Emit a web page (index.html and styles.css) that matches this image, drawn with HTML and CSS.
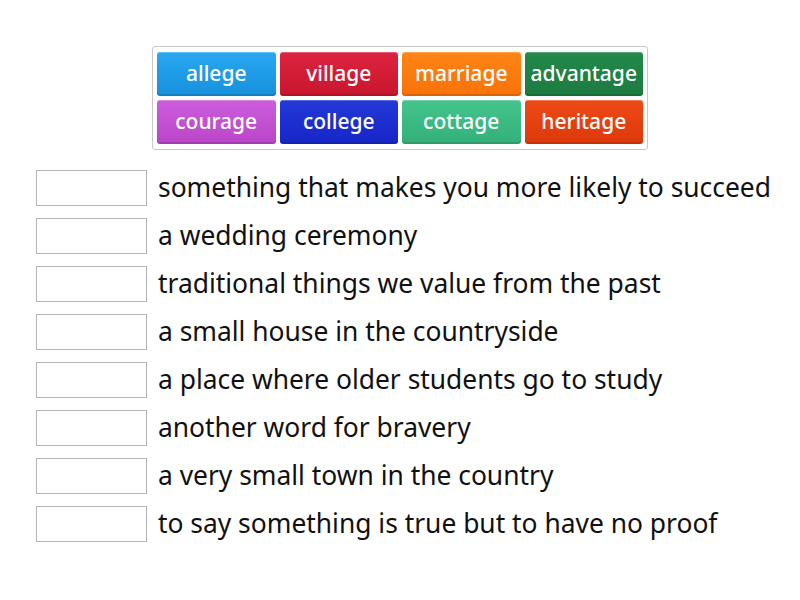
FILE: index.html
```html
<!DOCTYPE html>
<html>
<head>
<meta charset="utf-8">
<link rel="stylesheet" href="styles.css">
</head>
<body>
<div class="page">
  <div class="bank">
    <div class="tile t-blue">allege</div>
    <div class="tile t-red">village</div>
    <div class="tile t-orange">marriage</div>
    <div class="tile t-green">advantage</div>
    <div class="tile t-purple">courage</div>
    <div class="tile t-navy">college</div>
    <div class="tile t-teal">cottage</div>
    <div class="tile t-vermilion">heritage</div>
  </div>
  <div class="list">
    <div class="row"><div class="slot"></div><div class="clue">something that makes you more likely to succeed</div></div>
    <div class="row"><div class="slot"></div><div class="clue">a wedding ceremony</div></div>
    <div class="row"><div class="slot"></div><div class="clue">traditional things we value from the past</div></div>
    <div class="row"><div class="slot"></div><div class="clue">a small house in the countryside</div></div>
    <div class="row"><div class="slot"></div><div class="clue">a place where older students go to study</div></div>
    <div class="row"><div class="slot"></div><div class="clue">another word for bravery</div></div>
    <div class="row"><div class="slot"></div><div class="clue">a very small town in the country</div></div>
    <div class="row"><div class="slot"></div><div class="clue">to say something is true but to have no proof</div></div>
  </div>
</div>
</body>
</html>
```
FILE: styles.css
```css
html, body {
  margin: 0;
  padding: 0;
  background: #ffffff;
}
body {
  font-family: "Noto Sans", "DejaVu Sans", sans-serif;
  width: 800px;
  height: 600px;
  overflow: hidden;
}
.page {
  padding-top: 46px;
}
.bank {
  width: 486px;
  margin: 0 auto;
  border: 1px solid #c8c8c8;
  border-radius: 3px;
  padding: 5px 4px 5px 4px;
  display: grid;
  grid-template-columns: repeat(4, 118.5px);
  grid-auto-rows: 44px;
  gap: 4px 4px;
}
.tile {
  border-radius: 3px;
  color: #ffffff;
  font-size: 21px;
  font-weight: 500;
  display: flex;
  align-items: center;
  justify-content: center;
  line-height: 1;
  padding-bottom: 2px;
  box-sizing: border-box;
  box-shadow: inset 0 -2px 0 rgba(0,0,0,0.12), inset 0 1px 0 rgba(255,255,255,0.25);
}
.t-blue { background: linear-gradient(#2aa8f2, #1690dc); }
.t-red { background: linear-gradient(#dd2440, #c8152d); }
.t-orange { background: linear-gradient(#ff8516, #f77208); }
.t-green { background: linear-gradient(#24894b, #1c7a40); }
.t-purple { background: linear-gradient(#cc5ddb, #b946c8); }
.t-navy { background: linear-gradient(#2439d8, #1526c6); }
.t-teal { background: linear-gradient(#45c48d, #33b079); }
.t-vermilion { background: linear-gradient(#ee4a16, #dd380a); }
.list {
  margin-top: 20px;
  padding-left: 36px;
  display: flex;
  flex-direction: column;
  gap: 12px;
}
.row {
  display: flex;
  align-items: center;
  height: 36px;
}
.slot {
  width: 109px;
  height: 34px;
  border: 1px solid #b4b4b4;
  flex: none;
}
.clue {
  margin-left: 11px;
  font-size: 26.4px;
  color: #111111;
  white-space: nowrap;
  line-height: 1;
  padding-bottom: 2px;
}
```
